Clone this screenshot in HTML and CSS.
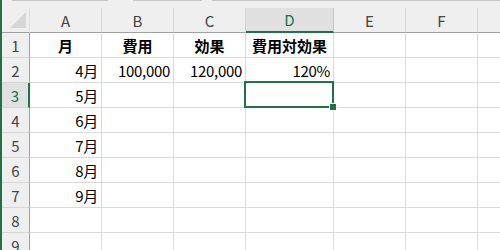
FILE: index.html
```html
<!DOCTYPE html>
<html lang="ja">

<head>
    <meta charset="UTF-8">
    <meta name="viewport" content="width=device-width, initial-scale=1.0">
    <title>費用対効果</title>
    <link rel="stylesheet" href="styles.css">
</head>

<body>
    <div class="app">
        <div class="topbar">
            <span class="seg seg-1"></span>
            <span class="seg seg-2"></span>
            <span class="seg seg-3"></span>
        </div>

        <div class="sheet">
            <!-- column headers -->
            <div class="corner">
                <svg width="16" height="16" viewBox="0 0 16 16"><polygon points="16,0 16,16 0,16" fill="#d6d6d6"/></svg>
            </div>
            <div class="col-head">A</div>
            <div class="col-head">B</div>
            <div class="col-head">C</div>
            <div class="col-head active">D</div>
            <div class="col-head">E</div>
            <div class="col-head">F</div>
            <div class="col-head last"></div>

            <!-- row 1 -->
            <div class="row-head">1</div>
            <div class="cell head">月</div>
            <div class="cell head">費用</div>
            <div class="cell head">効果</div>
            <div class="cell head">費用対効果</div>
            <div class="cell"></div>
            <div class="cell"></div>
            <div class="cell last"></div>

            <!-- row 2 -->
            <div class="row-head">2</div>
            <div class="cell num">4月</div>
            <div class="cell num">100,000</div>
            <div class="cell num">120,000</div>
            <div class="cell num">120%</div>
            <div class="cell"></div>
            <div class="cell"></div>
            <div class="cell last"></div>

            <!-- row 3 -->
            <div class="row-head active">3</div>
            <div class="cell num">5月</div>
            <div class="cell"></div>
            <div class="cell"></div>
            <div class="cell selected">
                <div class="sel-box"></div>
                <div class="fill-handle"></div>
            </div>
            <div class="cell"></div>
            <div class="cell"></div>
            <div class="cell last"></div>

            <!-- row 4 -->
            <div class="row-head">4</div>
            <div class="cell num">6月</div>
            <div class="cell"></div>
            <div class="cell"></div>
            <div class="cell"></div>
            <div class="cell"></div>
            <div class="cell"></div>
            <div class="cell last"></div>

            <!-- row 5 -->
            <div class="row-head">5</div>
            <div class="cell num">7月</div>
            <div class="cell"></div>
            <div class="cell"></div>
            <div class="cell"></div>
            <div class="cell"></div>
            <div class="cell"></div>
            <div class="cell last"></div>

            <!-- row 6 -->
            <div class="row-head">6</div>
            <div class="cell num">8月</div>
            <div class="cell"></div>
            <div class="cell"></div>
            <div class="cell"></div>
            <div class="cell"></div>
            <div class="cell"></div>
            <div class="cell last"></div>

            <!-- row 7 -->
            <div class="row-head">7</div>
            <div class="cell num">9月</div>
            <div class="cell"></div>
            <div class="cell"></div>
            <div class="cell"></div>
            <div class="cell"></div>
            <div class="cell"></div>
            <div class="cell last"></div>

            <!-- row 8 -->
            <div class="row-head">8</div>
            <div class="cell"></div>
            <div class="cell"></div>
            <div class="cell"></div>
            <div class="cell"></div>
            <div class="cell"></div>
            <div class="cell"></div>
            <div class="cell last"></div>

            <!-- row 9 -->
            <div class="row-head">9</div>
            <div class="cell"></div>
            <div class="cell"></div>
            <div class="cell"></div>
            <div class="cell"></div>
            <div class="cell"></div>
            <div class="cell"></div>
            <div class="cell last"></div>
        </div>
    </div>
</body>

</html>
```

FILE: styles.css
```css
html,
body {
    margin: 0;
    height: 250px;
    overflow: hidden;
}

body {
    font-family: "Noto Sans CJK JP", "Noto Sans", sans-serif;
    font-size: 15px;
    color: #000;
    background: #efefef;
}

.app {
    border-left: 2px solid #217346;
    height: 250px;
    box-sizing: border-box;
}

.topbar {
    height: 8px;
    display: flex;
    align-items: flex-start;
    background: #efefef;
}

.seg {
    height: 1px;
    background: #c6c6c6;
}

.seg-1 {
    margin-left: 10px;
    width: 96px;
}

.seg-2 {
    margin-left: 25px;
    width: 69px;
}

.seg-3 {
    margin-left: 10px;
    flex: 1;
}

.sheet {
    display: grid;
    grid-template-columns: 28px 72px 72px 72px 88px 72px 72px 1fr;
    grid-auto-rows: 25px;
    background: #fff;
}

.sheet > div {
    box-sizing: border-box;
}

.corner {
    background: #efefef;
    border-right: 1px solid #dedede;
    border-bottom: 1px solid #a0a0a0;
    display: flex;
    align-items: flex-end;
    justify-content: flex-end;
    padding: 0 3px 4px 0;
}

.corner svg {
    display: block;
}

.col-head {
    background: #efefef;
    border-right: 1px solid #d6d6d6;
    border-bottom: 1px solid #a0a0a0;
    color: #444;
    display: flex;
    align-items: center;
    justify-content: center;
}

.col-head.active {
    background: #e1e1e1;
    color: #217346;
    border-bottom: 2px solid #217346;
    border-right-color: #c6c6c6;
}

.row-head {
    background: #efefef;
    border-right: 1px solid #a0a0a0;
    border-bottom: 1px solid #d6d6d6;
    color: #444;
    display: flex;
    align-items: center;
    justify-content: center;
}

.row-head.active {
    background: #e1e1e1;
    color: #217346;
    border-right: 2px solid #217346;
}

.cell {
    border-right: 1px solid #dadada;
    border-bottom: 1px solid #dadada;
    display: flex;
    align-items: center;
    padding: 0 3px;
    white-space: nowrap;
}

.cell.last,
.col-head.last {
    border-right: none;
}

.cell.head {
    justify-content: center;
    font-weight: bold;
}

.cell.num {
    justify-content: flex-end;
    letter-spacing: -0.3px;
}

.cell.selected {
    position: relative;
}

.sel-box {
    position: absolute;
    left: -2px;
    top: -2px;
    width: 90px;
    height: 27px;
    border: 2px solid #217346;
    box-sizing: border-box;
}

.fill-handle {
    position: absolute;
    right: -3px;
    bottom: -3px;
    width: 6px;
    height: 6px;
    background: #217346;
    box-shadow: 0 0 0 1px #fff;
}
```
